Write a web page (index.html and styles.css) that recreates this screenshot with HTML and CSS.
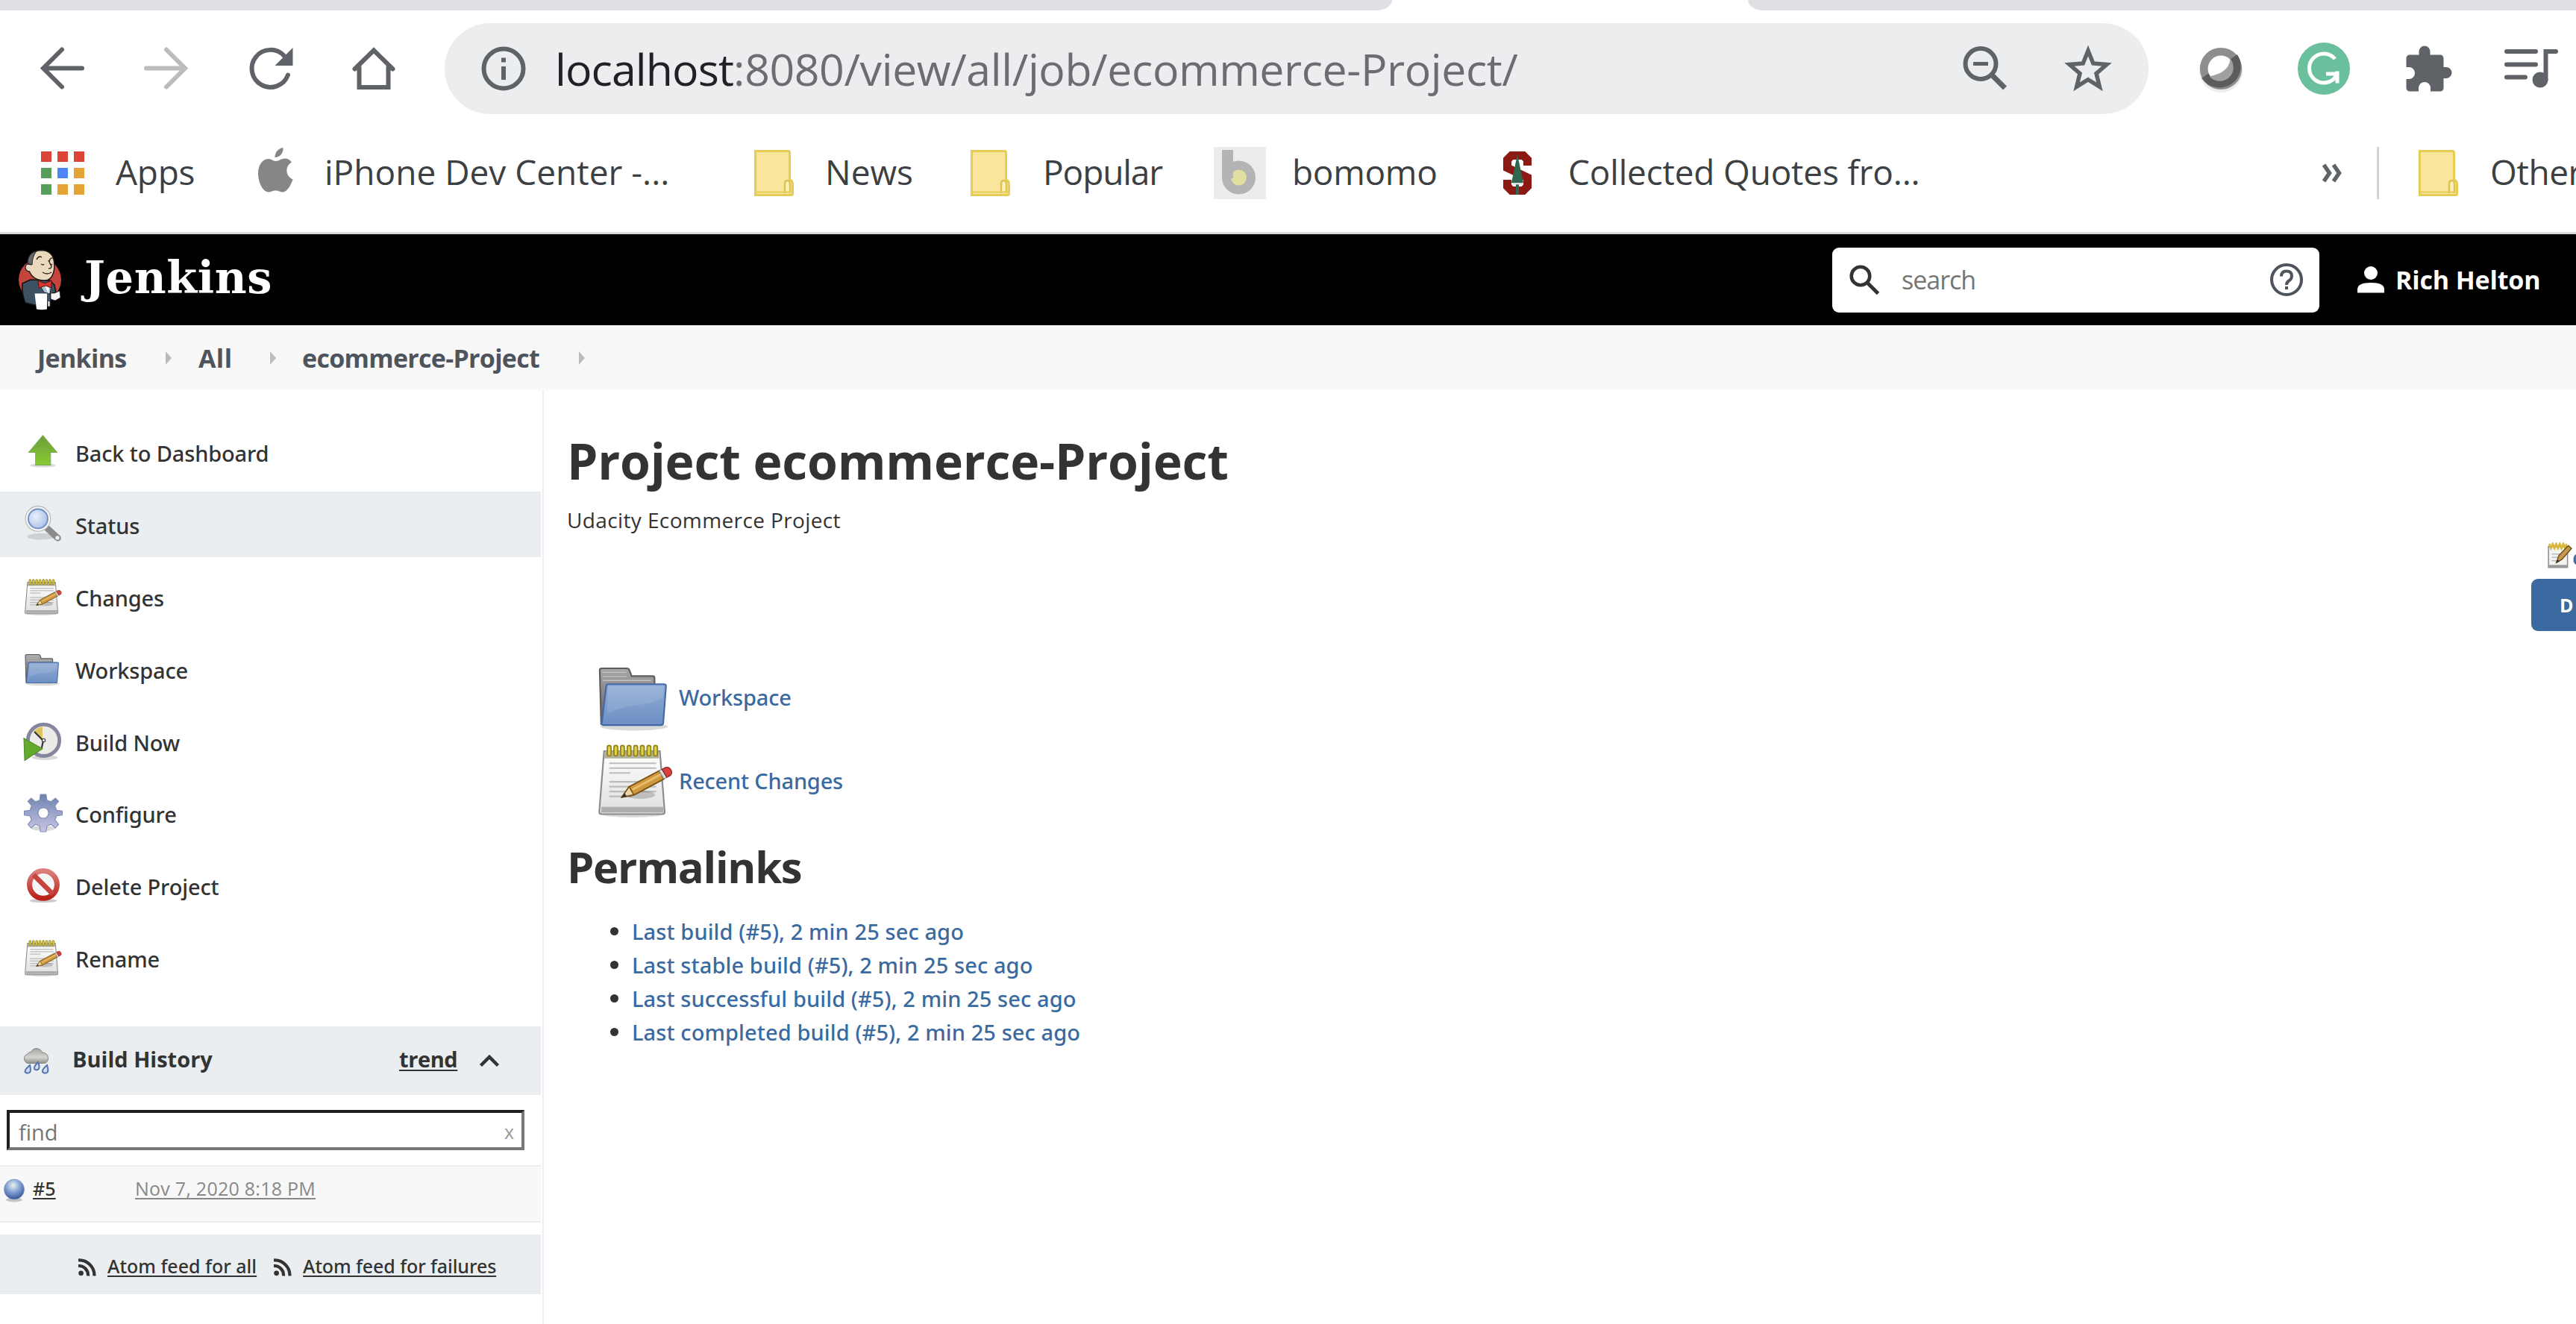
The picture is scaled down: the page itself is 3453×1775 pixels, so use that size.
FILE: index.html
```html
<!DOCTYPE html>
<html lang="en">
<head>
<meta charset="utf-8">
<title>ecommerce-Project [Jenkins]</title>
<link rel="stylesheet" href="styles.css">
</head>
<body>
<svg class="defs" width="0" height="0" aria-hidden="true">
  <defs>
    <linearGradient id="blue" x1="0" y1="0" x2="0" y2="1"><stop offset="0" stop-color="#92add6"/><stop offset="1" stop-color="#6d8fc4"/></linearGradient>
    <linearGradient id="grey" x1="0" y1="0" x2="0" y2="1"><stop offset="0" stop-color="#a8a8a8"/><stop offset="1" stop-color="#5c5c5c"/></linearGradient>
    <linearGradient id="paper" x1="0" y1="0" x2="0" y2="1"><stop offset="0" stop-color="#fff"/><stop offset="1" stop-color="#dedede"/></linearGradient>
    <linearGradient id="green" x1="0" y1="0" x2="0" y2="1"><stop offset="0" stop-color="#6d9b3a"/><stop offset="1" stop-color="#86cc33"/></linearGradient>
    <linearGradient id="red" x1="0" y1="0" x2="0" y2="1"><stop offset="0" stop-color="#dc7f7c"/><stop offset="1" stop-color="#b92119"/></linearGradient>
    <linearGradient id="gear" x1="0" y1="0" x2="0" y2="1"><stop offset="0" stop-color="#6c82ad"/><stop offset="1" stop-color="#c9c6e6"/></linearGradient>
    <linearGradient id="cloud" x1="0" y1="0" x2="0" y2="1"><stop offset="0" stop-color="#a3a39f"/><stop offset=".6" stop-color="#d4d4d0"/><stop offset="1" stop-color="#8e8e8b"/></linearGradient>
    <radialGradient id="ball" cx=".45" cy=".3" r=".7"><stop offset="0" stop-color="#eef3ee"/><stop offset=".45" stop-color="#8aa9d8"/><stop offset="1" stop-color="#32559b"/></radialGradient>
    <radialGradient id="lens" cx=".4" cy=".4" r=".7"><stop offset="0" stop-color="#e8effb"/><stop offset="1" stop-color="#9db8e2"/></radialGradient>
    <symbol id="i-notepad" viewBox="0 0 48 48">
      <ellipse cx="22" cy="45" rx="19" ry="2" fill="#000" opacity=".15"/>
      <path d="M4.500 6h34.500l3 37.500q0 1.500-1.500 1.500h-37.500q-1.500 0-1.500-1.500z" fill="url(#paper)" stroke="#8b8b8b"/>
      <path d="M5 6h33.500v4.500h-34z" fill="#b3b09a"/>
      <path d="M2.800 40.500h38.400v3.500h-38.400z" fill="#adadad"/>
      <path d="M7.700 13.500h29M7.700 16.500h29M7.700 19.500h13M7.700 25h29M7.700 28h29M7.700 31h29M7.700 34h14" stroke="#bcbcbc" stroke-width="1"/>
      <g fill="#e0d048" stroke="#8f8214" stroke-width=".8"><rect x="6.500" y="2.500" width="2.300" height="6.500" rx="1.100"/><rect x="10.600" y="2.500" width="2.300" height="6.500" rx="1.100"/><rect x="14.700" y="2.500" width="2.300" height="6.500" rx="1.100"/><rect x="18.800" y="2.500" width="2.300" height="6.500" rx="1.100"/><rect x="22.900" y="2.500" width="2.300" height="6.500" rx="1.100"/><rect x="27" y="2.500" width="2.300" height="6.500" rx="1.100"/><rect x="31.100" y="2.500" width="2.300" height="6.500" rx="1.100"/><rect x="35.200" y="2.500" width="2.300" height="6.500" rx="1.100"/></g>
      <ellipse cx="27" cy="33" rx="9" ry="2.500" fill="#000" opacity=".18"/>
      <path d="M15.500 34.500l4.500-6.500 18.500-9.800 3 5-18.500 10z" fill="#cf9a3e" stroke="#7c5313" stroke-width=".9"/>
      <path d="M22 29.800l18-9.600" stroke="#e8bd70" stroke-width="1.300"/>
      <path d="M15.500 34.500l4.500-6.500 2.800 5z" fill="#ecd6a6" stroke="#7c5313" stroke-width=".7"/>
      <path d="M15.300 34.700l1.900-2.700 1.300 2z" fill="#333"/>
      <path d="M38.500 18.200l1.800-1 3 5-1.800 1z" fill="#ddd" stroke="#888" stroke-width=".5"/>
      <path d="M40.300 17.200l2-1q2.600-.8 3.800 1.800 .8 2.200-1 3.300l-1.800 .9z" fill="#d8403a" stroke="#8e2622" stroke-width=".6"/>
    </symbol>
    <symbol id="i-folder" viewBox="0 0 48 48">
      <ellipse cx="23" cy="42" rx="21" ry="2.500" fill="#000" opacity=".15"/>
      <path d="M1.800 7.200q0-1.200 1.200-1.200h15.500q1.200 0 1.700 1.200l1.300 3.600h13q1.200 0 1.200 1.200v28.500h-33z" fill="url(#grey)" stroke="#5d5d5d"/>
      <path d="M3.500 8.500h14.500M3.500 11h15M3.500 13.500h30" stroke="#c2c2c2" stroke-width=".6"/>
      <path d="M5.800 17q.1-1.200 1.300-1.200h34.500q1.300 0 1.200 1.300l-1.700 22.700q-.2 1.300-1.500 1.300h-35.500q-1.200 0-1-1.200z" fill="url(#blue)" stroke="#4468a8"/>
      <path d="M6.900 17.200h34.500l-.5 6c-8 8-20 3-34.500 11z" fill="#fff" opacity=".1"/>
    </symbol>
    <symbol id="i-note" viewBox="0 0 16 16" preserveAspectRatio="none">
      <path d="M1 2.500h12v12.500h-12z" fill="#f3f3f3" stroke="#8b8b8b" stroke-width=".7"/>
      <path d="M1.200 13.500h11.600v1.500h-11.600z" fill="#999"/>
      <path d="M3 7h6M3 9h4M3 11h3" stroke="#bbb" stroke-width=".7"/>
      <path d="M1.500 1l1.100 2.500 1.100-2.500 1.100 2.500 1.100-2.500 1.100 2.500 1.100-2.500 1.100 2.500 1.100-2.500 1.100 2.500 1-2.500" fill="none" stroke="#d9b73b" stroke-width="1.300"/>
      <path d="M6 12l1.500-4 6-6 2 1.700-6 6.500z" fill="#c89a4c" stroke="#6e4e1b" stroke-width=".7"/><path d="M5.800 12.500l.8-2.200 1.500 1z" fill="#333"/>
    </symbol>
    <symbol id="i-bmfolder" viewBox="0 0 53 62">
      <path d="M1.500 1.500h44q2 0 2 2v36.500q4 1 4 6v12.500q0 2-2 2h-48z" fill="#f9e69c" stroke="#e6cb55" stroke-width="3"/>
      <path d="M41 58v-12q0-5 3.500-5t3.500 5v12" fill="#fbf0bd" stroke="#e0c24f" stroke-width="2.500"/>
      <path d="M3 56.500h45" stroke="#e6cb55" stroke-width="2"/>
    </symbol>
    <symbol id="i-rss" viewBox="0 0 24 24">
      <circle cx="3.600" cy="19.800" r="3.400"/><path d="M0 10a12.500 12.500 0 0 1 13 13.500M0 2.500a20.500 20.500 0 0 1 21.500 21" fill="none" stroke="#333" stroke-width="4.200"/>
    </symbol>
  </defs>
</svg>

<div class="browser">
  <div class="tabs"><span class="tab tab-l"></span><span class="tab tab-r"></span></div>
  <div class="toolbar">
    <svg class="nav" viewBox="0 0 58 58"><path d="M56 28.500H5M29 3.500L4 28.500 29 53.500" fill="none" stroke="#5f6368" stroke-width="6" stroke-linecap="round" stroke-linejoin="miter"/></svg>
    <svg class="nav" viewBox="0 0 58 58"><path d="M2 28.500H53M29 3.500L54 28.500 29 53.500" fill="none" stroke="#babcbe" stroke-width="6" stroke-linecap="round"/></svg>
    <svg class="nav reload" viewBox="0 0 58 58"><path d="M52 37.500A25 25 0 1 1 47 12" fill="none" stroke="#5f6368" stroke-width="6" stroke-linecap="round"/><path d="M58.500 1v24h-24z" fill="#5f6368"/></svg>
    <svg class="nav home" viewBox="0 0 58 58"><path d="M3.500 29.500L29 4.500 54.500 29.500M9.500 27v27h39V27" fill="none" stroke="#5f6368" stroke-width="6" stroke-linecap="round"/></svg>
    <div class="address">
      <svg class="info" viewBox="0 0 60 60"><circle cx="30" cy="30" r="26.500" fill="none" stroke="#5f6368" stroke-width="6"/><path d="M27 15.500h6v6h-6zM27 27h6v18h-6z" fill="#5f6368"/></svg>
      <span class="url"><b>localhost</b>:8080/view/all/job/ecommerce-Project/</span>
      <svg class="zoomout" viewBox="0 0 60 60"><circle cx="24" cy="23.500" r="20.500" fill="none" stroke="#5f6368" stroke-width="6"/><path d="M14 23.500h20" stroke="#5f6368" stroke-width="5"/><path d="M39.500 39l17 17" stroke="#5f6368" stroke-width="7"/></svg>
      <svg class="star" viewBox="0 0 66 64"><path d="M33 8l6.800 17 18.200 1.500-14 12 4.400 17.800L33 46.700 17.600 56.300 22 38.500 8 26.500 26.200 25z" fill="none" stroke="#5f6368" stroke-width="5.500"/></svg>
    </div>
    <svg class="ext ext-ring" viewBox="0 0 64 64"><circle cx="32" cy="35" r="30" fill="#ececec"/><circle cx="32" cy="32" r="23.500" fill="#fff" stroke="#8e8e8e" stroke-width="11"/><path d="M50 15.500A23.500 23.500 0 1 1 10 42" fill="none" stroke="#5c5c5c" stroke-width="11"/><path d="M45 18.500Q43 38 16 42.500A18.500 18.500 0 1 0 45 18.500z" fill="#a0a0a0"/></svg>
    <svg class="ext ext-g" viewBox="0 0 70 70"><circle cx="35" cy="35" r="35" fill="#6ac09d"/><path d="M50 22A19.500 19.500 0 1 0 52 44M38 42h14.500M53 38.500v16" fill="none" stroke="#fff" stroke-width="5"/></svg>
    <svg class="ext ext-puzzle" viewBox="0 0 62 62"><path d="M5 12.500H17.500V8a7.500 7.500 0 0 1 15 0v4.500H46a4.500 4.500 0 0 1 4.500 4.500V29h3.500a7.500 7.500 0 0 1 0 15h-3.500V57a4.500 4.500 0 0 1-4.500 4.500H33V57a8 8 0 0 0-16 0v4.500H5a4.500 4.500 0 0 1-4.500-4.500V45H4a8 8 0 0 0 0-16H.5V17A4.500 4.500 0 0 1 5 12.500z" fill="#5f6368"/></svg>
    <svg class="ext ext-music" viewBox="0 0 72 54"><path d="M3 4h39M3 21.500h39M3 38.500h25" stroke="#5f6368" stroke-width="6" stroke-linecap="round"/><circle cx="48" cy="42" r="10.500" fill="#5f6368"/><path d="M55.500 42V4H69" fill="none" stroke="#5f6368" stroke-width="6" stroke-linecap="round"/></svg>
  </div>
  <div class="bookmarks">
    <svg class="apps" viewBox="0 0 58 58"><g fill="#db4437"><path d="M0 0h14v14H0zM22 0h14v14H22zM44 0h14v14H44z"/></g><g fill="#569e5c"><path d="M0 22h14v14H0zM0 44h14v14H0z"/></g><path d="M22 22h14v14H22z" fill="#4d86f5"/><path d="M44 22h14v14H44zM22 44h14v14H22zM44 44h14v14H44z" fill="#e3a335"/></svg>
    <span class="bm bm-apps">Apps</span>
    <svg class="apple" viewBox="0 0 48 64"><path d="M24 18c5 0 8-3.500 13-3.500 4 0 7 2 9 5-10 6-8 19 1.500 23-3 9-8 17-13.500 17-4 0-5-2-9.500-2s-6 2-9.500 2C7 59.500 1 46 1 34.500 1 22 8 15 15 15c4 0 6 3 9 3zM23.500 13C23.500 6 28 1 34.500 0c.5 7-4 13-11 13z" fill="#868686"/></svg>
    <span class="bm bm-iphone">iPhone Dev Center -...</span>
    <svg class="bmf"><use href="#i-bmfolder"/></svg>
    <span class="bm bm-news">News</span>
    <svg class="bmf"><use href="#i-bmfolder"/></svg>
    <span class="bm bm-popular">Popular</span>
    <svg class="bomomo" viewBox="0 0 70 70"><path d="M0 0h70v70H0z" fill="#ececec"/><circle cx="33.500" cy="41" r="16.500" fill="#e3dfa0" stroke="#b4b4b4" stroke-width="12"/><path d="M18.500 4v38" stroke="#b4b4b4" stroke-width="15"/></svg>
    <span class="bm bm-bomomo">bomomo</span>
    <svg class="stanford" viewBox="0 0 38 58"><path d="M32.500 19V11L27 5.500H11L5.500 11v11l27 13v12L27 52.500H11L5.500 47V38" fill="none" stroke="#8c1a14" stroke-width="11"/><path d="M19 4l8 38h-6v16h-4V42h-6z" fill="#2f6650"/><path d="M12 42h14v2.500H12z" fill="#ddd"/></svg>
    <span class="bm bm-quotes">Collected Quotes fro...</span>
    <svg class="more" viewBox="0 0 28 26"><path d="M3 2l7.500 11L3 24M16 2l7.500 11L16 24" fill="none" stroke="#5f6368" stroke-width="5.500"/></svg>
    <span class="vline"></span>
    <svg class="bmf"><use href="#i-bmfolder"/></svg>
    <span class="bm bm-other">Other</span>
  </div>
</div>

<header class="header">
  <svg class="butler" viewBox="0 0 59 83">
    <circle cx="29.500" cy="41" r="28.500" fill="#c4453c"/>
    <path d="M17 41L6 46q-1 14 4 26l12 3h22V60l7-2-2-10-6-6z" fill="#3d5163" stroke="#111" stroke-width="1.500"/>
    <path d="M14 22Q12 3 31 1.500 47 2 48.500 17q1 9-1 15-3 10-12 10Q20 42 15 29q-4-1-1-7z" fill="#ead9bd" stroke="#221c18" stroke-width="1.500"/>
    <path d="M13 21Q12 6 25 2.500 19 10 19 21q-6 0-6 0z" fill="#6b676b" stroke="#222"/>
    <path d="M18 21q-7-3-8 3 0 6 6 6" fill="#ead9bd" stroke="#222" stroke-width="1.300"/>
    <path d="M25 14q3-6 7-3M31 20q3 2 4 0M42 17q1-6 5-5M46 20q-2 2-3 0M41 15l4 8q0 3-4 3M33 31q6 4 12 0" fill="none" stroke="#33261f" stroke-width="1.400"/>
    <path d="M29 48l6 10 8 2 2-12z" fill="#a9c0d2" stroke="#222"/><path d="M36 49h6l-1 11z" fill="#fff"/>
    <path d="M27 42l9 4 9-4v10l-8-3-9 3z" fill="#d9382f" stroke="#511"/>
    <path d="M22.500 59.500h16.500v21q-7 1.500-14 0z" fill="#fff"/><path d="M44 59h5l7-3 1 9-7 4-6-2zM40 69l3 1v7h-3z" fill="#f4f4f4" stroke="#222" stroke-width=".8"/>
  </svg>
  <span class="brand">Jenkins</span>
  <div class="searchbox">
    <svg class="mag" viewBox="0 0 40 40"><circle cx="15" cy="15" r="12.300" fill="none" stroke="#333" stroke-width="4.600"/><path d="M24 24l14.500 14.500" stroke="#333" stroke-width="5"/></svg>
    <span class="ph">search</span>
    <svg class="help" viewBox="0 0 44 44"><circle cx="22" cy="22" r="20" fill="none" stroke="#4d545d" stroke-width="4"/><path d="M15 17.500q0-7 7-7t7 6.500q0 4-4 6.500-3 2-3 5.500" fill="none" stroke="#4d545d" stroke-width="4"/><path d="M20 31h4v4h-4z" fill="#4d545d"/></svg>
  </div>
  <svg class="person" viewBox="0 0 36 36"><circle cx="18" cy="9" r="9" fill="#fff"/><path d="M0 35.500v-4.500q0-9 18-9t18 9v4.500z" fill="#fff"/></svg>
  <span class="user">Rich Helton</span>
</header>

<nav class="crumbs">
  <span class="c1">Jenkins</span><i class="arr"></i>
  <span class="c2">All</span><i class="arr"></i>
  <span class="c3">ecommerce-Project</span><i class="arr"></i>
</nav>

<div class="page">
  <aside class="side">
    <ul class="tasks">
      <li><svg viewBox="0 0 48 48"><ellipse cx="23.500" cy="40.500" rx="16" ry="2.500" fill="#000" opacity=".15"/><path d="M23.500 3.500L41 24.500h-8v15.500h-18.500V24.500H6z" fill="url(#green)" stroke="#7fae50" stroke-width="1"/></svg><span>Back to Dashboard</span></li>
      <li class="on"><svg viewBox="0 0 48 48"><ellipse cx="21" cy="39" rx="17" ry="4" fill="#000" opacity=".12"/><path d="M29 29l13 12" stroke="#8b8b8b" stroke-width="8" stroke-linecap="round"/><circle cx="41.500" cy="40.500" r="2.500" fill="#eee"/><circle cx="17.500" cy="17" r="14" fill="url(#lens)" stroke="#b5b5b5" stroke-width="4"/><circle cx="17.500" cy="17" r="14" fill="none" stroke="#f7f7f7" stroke-width="2"/><circle cx="17.500" cy="17" r="11.800" fill="none" stroke="#6d90cc" stroke-width="1.500"/></svg><span>Status</span></li>
      <li><svg><use href="#i-notepad"/></svg><span>Changes</span></li>
      <li><svg><use href="#i-folder"/></svg><span>Workspace</span></li>
      <li><svg viewBox="0 0 48 48"><ellipse cx="26" cy="44" rx="16" ry="3" fill="#000" opacity=".15"/><circle cx="24.500" cy="22.500" r="19.500" fill="#ebebe7" stroke="#86869f" stroke-width="4.500"/><path d="M23 22L12 12q5-6 11-6z" fill="#dcc65d"/><path d="M24 23L13 12M24 23l-2 9" stroke="#333" stroke-width="2"/><circle cx="24.500" cy="22.500" r="2" fill="#eee" stroke="#333"/><path d="M0 20l23 13L1 47.500z" fill="#62ab2f" stroke="#528a2c" stroke-width="1"/></svg><span>Build Now</span></li>
      <li><svg viewBox="0 0 48 48"><ellipse cx="24" cy="43" rx="15" ry="3" fill="#000" opacity=".15"/><path fill-rule="evenodd" d="M20.500 1h7l1 7 5 2L39 5.500l4 4L38.500 15l2 5.500 7 1v5l-7 1-2 5L43 38l-4 4.500-5.500-4.500-5 2-1 7h-7l-1-7-5-2L9 42.500 5 38l4.500-5.500-2-5-7-1v-5l7-1 2-5.500L5 9.500l4-4L14.500 10l5-2zM24 17.500a6.500 6.500 0 1 0 .1 0z" fill="url(#gear)" stroke="#7f8bb5" stroke-width="1"/></svg><span>Configure</span></li>
      <li><svg viewBox="0 0 48 48"><ellipse cx="24" cy="43" rx="17" ry="2.500" fill="#000" opacity=".2"/><circle cx="24" cy="23" r="17" fill="#f6f6f6" stroke="url(#red)" stroke-width="6.500"/><path d="M12 11l24 24" stroke="#c7453f" stroke-width="6"/></svg><span>Delete Project</span></li>
      <li><svg><use href="#i-notepad"/></svg><span>Rename</span></li>
    </ul>
    <div class="history-head">
      <svg class="rain" viewBox="0 0 33 35"><path d="M5 20.500a6.500 6.500 0 0 1-1-12Q7 5 9.500 5.500 12 .5 17 .5t8 5.500q7.500 1 7.500 8 0 6-6 6.500z" fill="url(#cloud)" stroke="#868683"/><g fill="#cfdcf3" stroke="#5472ad" stroke-width="2"><path d="M8 23Q1 29 1.500 32q3 3.500 7 0 1-3-.5-9zM19 19Q13 25 14 28q3 3 6 0 1.500-3-1-9zM31 23q-7 6-6 9 3 3.500 7 0 1-3-1-9z"/></g></svg>
      <span class="bh">Build History</span>
      <a class="trend">trend</a>
      <svg class="caret" viewBox="0 0 28 18"><path d="M2.500 15.500L14 4l11.500 11.500" fill="none" stroke="#333" stroke-width="4.500"/></svg>
    </div>
    <div class="find"><span>find</span><em>x</em></div>
    <div class="build">
      <svg class="orb" viewBox="0 0 30 32"><ellipse cx="15" cy="28.500" rx="11" ry="3" fill="#000" opacity=".2"/><circle cx="15" cy="14.500" r="13.500" fill="url(#ball)" stroke="#7d93bd" stroke-width=".8"/></svg>
      <a class="num">#5</a><a class="date">Nov 7, 2020 8:18 PM</a>
    </div>
    <div class="feeds">
      <svg class="rss"><use href="#i-rss"/></svg><a class="f1">Atom feed for all</a>
      <svg class="rss"><use href="#i-rss"/></svg><a class="f2">Atom feed for failures</a>
    </div>
  </aside>
  <main class="main">
    <h1>Project ecommerce-Project</h1>
    <div class="desc">
      <p>Udacity Ecommerce Project</p>
      <div class="actions">
        <div class="edit"><svg><use href="#i-note"/></svg><a>e</a></div>
        <div class="btn">D</div>
      </div>
    </div>
    <div class="big"><svg><use href="#i-folder"/></svg><a class="b1">Workspace</a></div>
    <div class="big"><svg><use href="#i-notepad"/></svg><a class="b2">Recent Changes</a></div>
    <h2>Permalinks</h2>
    <ul class="links">
      <li><a>Last build (#5), 2 min 25 sec ago</a></li>
      <li><a>Last stable build (#5), 2 min 25 sec ago</a></li>
      <li><a>Last successful build (#5), 2 min 25 sec ago</a></li>
      <li><a>Last completed build (#5), 2 min 25 sec ago</a></li>
    </ul>
  </main>
</div>
</body>
</html>
```
FILE: styles.css
```css
* { box-sizing: border-box; }
body { margin: 0; width: 3453px; height: 1775px; overflow: hidden; background: #fff; color: #333; font-family: "Open Sans", "Noto Sans", sans-serif; white-space: nowrap; display: flex; flex-direction: column; }
svg { flex: none; display: block; overflow: visible; }
.defs { position: absolute; }
span, a { flex: none; }
ul { list-style: none; margin: 0; padding: 0; }

/* browser chrome */
.browser { height: 314px; flex: none; border-bottom: 3px solid #d8dadc; }
.tabs { height: 14px; display: flex; justify-content: space-between; }
.tab { background: #dee0e4; height: 14px; }
.tab-l { width: 1866px; border-bottom-right-radius: 28px 18px; }
.tab-r { width: 1110px; border-bottom-left-radius: 28px 18px; }
.toolbar { display: flex; align-items: center; padding: 17px 0 0 54px; height: 139px; }
.nav { width: 58px; height: 58px; margin-right: 82px; }
.reload { margin-right: 80px; }
.home { margin-right: 66px; }
.address { width: 2284px; height: 122px; border-radius: 61px; background: #ecedef; display: flex; align-items: center; padding-left: 49px; }
.info { width: 60px; height: 60px; margin-right: 39px; }
.url { font-size: 59px; letter-spacing: -.42px; color: #6b6d70; width: 1887px; }
.url b { font-weight: 400; letter-spacing: -.9px; color: #202124; }
.zoomout { width: 60px; height: 60px; margin-right: 75px; }
.star { width: 66px; height: 64px; }
.ext-ring { width: 62px; height: 62px; margin-left: 66px; }
.ext-g { width: 70px; height: 70px; margin-left: 72px; }
.ext-puzzle { width: 62px; height: 62px; margin-left: 75px; }
.ext-music { width: 72px; height: 54px; margin-left: 70px; }
.bookmarks { display: flex; align-items: center; height: 158px; padding-left: 55px; }
.bm { font-size: 46px; line-height: 62px; color: #3c4043; margin-top: -4px; }
.apps { width: 58px; height: 58px; margin-right: 42px; }
.bm-apps { width: 190px; letter-spacing: -.3px; }
.apple { width: 48px; height: 64px; margin-right: 42px; margin-top: -4px; }
.bm-iphone { width: 576px; }
.bmf { width: 53px; height: 62px; }
.bm-news { margin-left: 42px; width: 195px; }
.bmf + .bm-popular { margin-left: 44px; width: 229px; letter-spacing: -1.100px; }
.bomomo { width: 70px; height: 70px; margin-right: 35px; }
.bm-bomomo { width: 283px; letter-spacing: -.3px; }
.stanford { width: 38px; height: 58px; margin-right: 49px; }
.bm-quotes { width: 1010px; letter-spacing: -.2px; }
.more { width: 28px; height: 26px; }
.vline { width: 3px; height: 70px; background: #d0d2d4; margin: 0 53px 0 46px; }
.bm-other { margin-left: 43px; letter-spacing: -.4px; }

/* jenkins header */
.header { height: 122px; flex: none; background: #000; display: flex; align-items: center; padding-left: 24px; }
.butler { width: 59px; height: 83px; margin-right: 30px; }
.brand { width: 2343px; font: bold 59px "DejaVu Serif", serif; letter-spacing: .6px; color: #fff; margin-top: -5px; }
.searchbox { width: 653px; height: 87px; border-radius: 9px; background: #fff; display: flex; align-items: center; padding-left: 23px; }
.mag { width: 40px; height: 40px; margin-right: 30px; }
.ph { font-size: 34px; letter-spacing: -1px; color: #757575; width: 494px; }
.help { width: 44px; height: 44px; }
.person { width: 36px; height: 36px; margin: 0 15px 0 51px; }
.user { font-size: 34px; font-weight: 700; letter-spacing: -.15px; color: #fff; }
.crumbs { height: 87px; flex: none; background: #f8f8f8; display: flex; align-items: center; padding-left: 50px; font-size: 34px; font-weight: 700; color: #4d545d; }
.arr { border: 9px solid transparent; border-left: 8px solid #bbb; border-right: 0; flex: none; }
.crumbs span { letter-spacing: -.7px; }
.c1 { width: 172px; }
.arr + .c2 { margin-left: 36px; width: 96px; letter-spacing: .4px; }
.c3 { margin-left: 35px; width: 371px; }

.page { flex: 1; display: flex; min-height: 0; }
.side { width: 729px; flex: none; border-right: 2px solid #eaeef2; padding: 39px 2px 0 0; }
.tasks { display: flex; flex-direction: column; gap: 9px; margin-bottom: 48px; }
.tasks li { height: 87.900px; display: flex; align-items: center; padding-left: 32px; gap: 17px; font: 500 29px "Noto Sans", sans-serif; letter-spacing: -.15px; }
.tasks span { margin-top: 3px; }
.tasks svg { width: 52px; height: 52px; }
.tasks .on, .history-head, .feeds { background: #eaeef1; }
.history-head { height: 92px; display: flex; align-items: center; padding-left: 32px; font-size: 29px; font-weight: 700; }
.rain { width: 33px; height: 35px; margin-right: 32px; }
.bh { width: 438px; margin-top: -6px; }
.trend { width: 107px; margin-top: -6px; letter-spacing: -.4px; }
.trend, .build a, .feeds a { text-decoration: underline; text-decoration-thickness: 2px; text-underline-offset: 3px; }
.caret { width: 28px; height: 18px; margin-top: 0; }
.find { margin: 20px 0 20px 9px; width: 694px; height: 54px; border: 4px solid; border-color: #1f1f1f #767676 #767676 #1f1f1f; display: flex; justify-content: space-between; align-items: center; padding: 4px 10px 0 12px; font-size: 29px; color: #757575; }
.find em { font-style: normal; font-size: 25px; color: #999; }
.build { height: 77px; border: solid #eaeef1; border-width: 2px 0; background: #f8f8f8; display: flex; padding: 10px 0 0 4px; font: 500 25px/38px "Noto Sans", sans-serif; }
.orb { width: 30px; height: 32px; margin: 6px 10px 0 0; }
.build .num { width: 137px; }
.num { letter-spacing: .1px; }
.date { font-family: "Open Sans", sans-serif; font-weight: 400; color: #888; letter-spacing: .25px; }
.feeds { height: 80px; margin-top: 16px; display: flex; align-items: center; padding: 3px 0 0 105px; font: 500 25px "Noto Sans", sans-serif; }
.rss { width: 24px; height: 24px; margin: 5px 15px 0 0; fill: #333; }
.feeds .f1 { margin-right: 23px; }
.f2 { letter-spacing: -.1px; }

.main { padding: 49px 0 0 32px; flex: 1; min-width: 0; }
h1 { margin: 0 0 15px -1px; font-size: 66px; line-height: 90px; letter-spacing: -.2px; }
.desc { display: flex; justify-content: space-between; height: 202px; }
.desc p { margin: 0 0 0 -1px; font-size: 28px; line-height: 40px; letter-spacing: .38px; }
.actions { width: 60px; padding-top: 50px; }
.edit { display: flex; padding-left: 21px; height: 49px; font: 500 29px/40px "Noto Sans", sans-serif; }
.edit svg { width: 34px; height: 36px; }
.edit a, .big a, .links a { color: #3b6aa0; }
.btn { height: 70px; background: #3b6aa0; border-radius: 9px 0 0 9px; color: #fff; font-weight: 700; font-size: 25px; line-height: 70px; padding-left: 38px; }
.big { display: flex; align-items: center; height: 111.500px; padding-left: 39px; gap: 6px; font: 500 29px "Noto Sans", sans-serif; letter-spacing: -.2px; }
.big svg { width: 104px; height: 104px; }
h2 { margin: 20px 0 24px -1px; font-size: 58px; line-height: 80px; letter-spacing: -1.300px; }
.links { padding-left: 57px; }
.links li { display: flex; align-items: center; height: 45px; font: 500 29px "Noto Sans", sans-serif; letter-spacing: .1px; }
.links li::before { content: ""; width: 11px; height: 11px; border-radius: 50%; background: #333; margin: 0 18px 0 0; }
```
